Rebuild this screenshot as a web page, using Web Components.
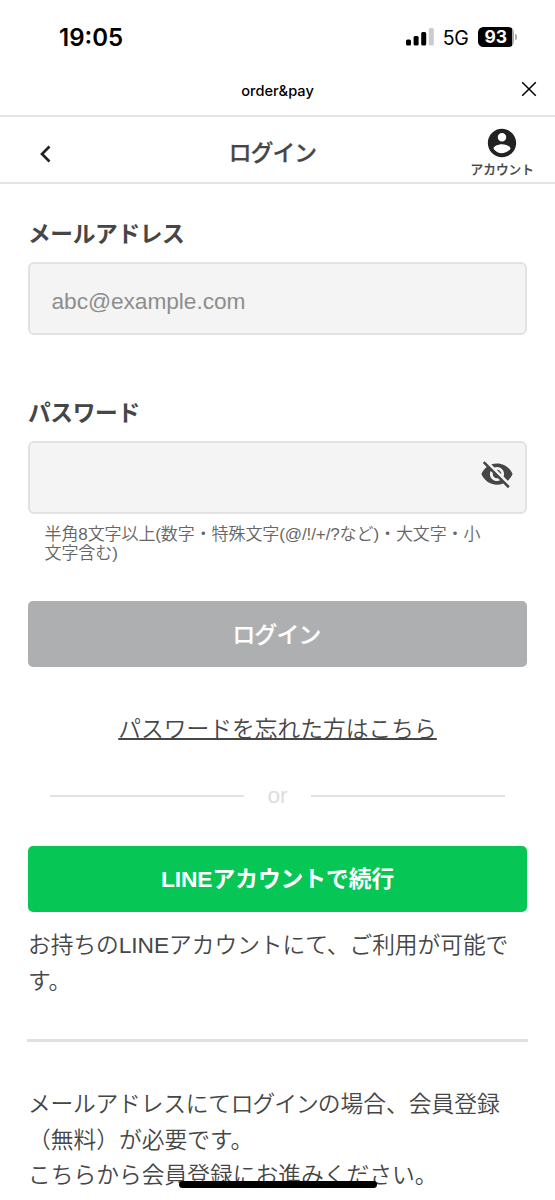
<!DOCTYPE html>
<html lang="ja">
<head>
<meta charset="utf-8">
<title>order&amp;pay ログイン</title>
<style>
html,body{margin:0;padding:0;background:#fff}
body{width:555px;height:1200px;overflow:hidden;color:#464646;font:22.75px/35.5px "Liberation Sans","Noto Sans CJK JP",sans-serif}
</style>
</head>
<body>
<login-screen></login-screen>
<script>
const define = (name, html) => customElements.define(name, class extends HTMLElement {
  constructor() {
    super();
    this.attachShadow({ mode: 'open' }).innerHTML = html;
  }
});

define('status-bar', `
<style>
:host{display:flex;height:74px;box-sizing:border-box;padding:0 38.500px 0 59px;align-items:center;justify-content:space-between;color:#000;font-family:Inter,sans-serif}
.time{font-size:24px;font-weight:600;line-height:30px;margin-top:1px}
.right{display:flex;align-items:center}
.net{font-size:19.500px;line-height:24px;margin:1px 9.500px 0 9px;letter-spacing:-.3px}
.bat{display:flex;align-items:center}
.cell{width:35.5px;height:20px;border-radius:5.5px;background:linear-gradient(90deg,#000 33.5px,#aaa 33.5px);color:#fff;font-size:17.500px;font-weight:700;line-height:20px;text-align:center}
.tip{width:2px;height:6px;margin-left:1px;border-radius:0 2px 2px 0;background:#aaa}
svg{display:block}
</style>
<span class="time">19:05</span>
<div class="right">
<svg width="28" height="18" viewBox="0 0 28 18"><rect y="11.5" width="5" height="6" rx="1.5"/><rect x="7.6" y="8" width="5" height="9.5" rx="1.5"/><rect x="15.2" y="4" width="5" height="13.5" rx="1.5"/><rect x="22.8" y="0" width="5" height="17.5" rx="1.5" fill="#ccc"/></svg>
<span class="net">5G</span>
<div class="bat"><div class="cell">93</div><div class="tip"></div></div>
</div>`);

define('browser-title', `
<style>
:host{display:grid;grid-template-columns:1fr auto 1fr;align-items:center;height:43px;box-sizing:border-box;padding:0 18px 12px;border-bottom:2px solid #e4e4e4;color:#000}
.name{grid-column:2;font:500 14.600px/20px Inter,sans-serif;margin-top:5px}
svg{justify-self:end;display:block}
</style>
<span class="name"><slot></slot></span>
<svg width="16" height="16" viewBox="0 0 16 16" fill="none" stroke="#000" stroke-width="1.5"><path d="M1.2 1.2l13.6 13.6M14.8 1.2L1.2 14.8"/></svg>`);

define('page-header', `
<style>
:host{display:grid;grid-template-columns:100px 1fr 100px;height:67px;box-sizing:border-box;border-bottom:2px solid #e4e4e4;padding:0 20px 0 38px}
.back{margin-top:28px;display:block}
.title{margin:19px 0 0 -28px;text-align:center;font-weight:500;letter-spacing:-.9px;-webkit-text-stroke:.25px #464646;white-space:nowrap}
.acct{justify-self:end;display:flex;flex-direction:column;align-items:center;font-size:12.700px;line-height:18px;font-weight:500;-webkit-text-stroke:.2px #464646;margin-right:1px}
.acct svg{margin:9px 0 1px;display:block}
</style>
<svg class="back" width="14" height="18" viewBox="0 0 14 18" fill="none" stroke="#222" stroke-width="2.7"><path d="M11.5 1.5L4 9l7.5 7.5"/></svg>
<span class="title"><slot></slot></span>
<div class="acct">
<svg width="34" height="34" viewBox="0 0 24 24" fill="#222"><path d="M12 2C6.48 2 2 6.48 2 12s4.48 10 10 10 10-4.48 10-10S17.520 2 12 2zm0 3c1.660 0 3 1.340 3 3s-1.340 3-3 3-3-1.340-3-3 1.340-3 3-3zm0 14.200c-2.500 0-4.710-1.280-6-3.220.030-1.990 4-3.080 6-3.080 1.990 0 5.970 1.090 6 3.080-1.290 1.940-3.500 3.220-6 3.220z"/></svg>
<span>アカウント</span></div>`);

define('form-field', `
<style>
:host{display:block}
label{display:block;box-sizing:border-box;font-weight:700;height:47px;line-height:35px;padding-top:2px;letter-spacing:-.4px}
.box{height:73px;box-sizing:border-box;border:2px solid #e2e2e2;border-radius:6px;background:#f4f4f4;display:flex;align-items:center;justify-content:space-between;padding:6px 11px 0 21.500px;color:#8e8e8e;letter-spacing:-.08px}
</style>
<label><slot name="label"></slot></label>
<div class="box"><span><slot></slot></span><slot name="icon"></slot></div>`);

define('eye-off', `
<style>:host{display:block;margin-top:-13px}svg{display:block}</style>
<svg width="34" height="34" viewBox="0 0 24 24" fill="#464646"><path d="M12 7c2.760 0 5 2.240 5 5 0 .650-.130 1.260-.360 1.830l2.920 2.920c1.510-1.260 2.700-2.890 3.430-4.750-1.730-4.390-6-7.500-11-7.500-1.400 0-2.740.250-3.980.700l2.160 2.160C10.740 7.130 11.350 7 12 7zM2 4.270l2.280 2.280.460.460C3.080 8.300 1.780 10.020 1 12c1.730 4.390 6 7.500 11 7.500 1.550 0 3.030-.300 4.380-.840l.420.420L19.730 22 21 20.730 3.270 3 2 4.270zM7.530 9.800l1.550 1.550c-.050.210-.080.430-.080.650 0 1.660 1.340 3 3 3 .220 0 .440-.030.650-.080l1.550 1.550c-.670.330-1.410.530-2.200.530-2.760 0-5-2.240-5-5 0-.790.200-1.530.530-2.200zm4.310-.780l3.150 3.150.020-.160c0-1.660-1.340-3-3-3l-.170.010z"/></svg>`);

define('action-button', `
<style>
:host{display:flex;height:66px;box-sizing:border-box;padding-top:2px;border-radius:5px;align-items:center;justify-content:center;background:var(--fill);color:#fff;font-weight:700;white-space:nowrap}
</style><slot></slot>`);

define('or-divider', `
<style>
:host{display:flex;align-items:center;height:30px;margin:0 22px;color:#ddd}
i{height:2px;flex:1;background:#e2e2e2}
span{width:67px;text-align:center}
</style><i></i><span>or</span><i></i>`);

define('text-line', `
<style>:host{display:block;white-space:nowrap;font-weight:350}</style><slot></slot>`);

define('home-indicator', `
<style>:host{position:absolute;left:179px;top:1181px;width:198px;height:7px;border-radius:4px;background:#000}</style>`);

define('login-screen', `
<style>
:host{display:block;position:relative;height:1200px;overflow:hidden}
main{padding:31px 28px 0;display:flex;flex-direction:column}
.pw{margin-top:59px}
.help{margin:12px 0 0 16.500px;font-size:17.050px;line-height:18.500px;color:#666;letter-spacing:-.12px}
.login{--fill:#aeafb1;margin-top:38px;padding:3px 2px 0 0;font-weight:500;letter-spacing:-.7px;-webkit-text-stroke:.2px #fff}
.forgot{align-self:center;margin-top:44px;line-height:36px;text-decoration:underline;text-decoration-thickness:1.500px;text-underline-offset:1px}
or-divider{margin-top:34px}
.line{--fill:#06c755;margin-top:35px;letter-spacing:-.05px}
.note{margin-top:16px;letter-spacing:-.06px}
hr{border:0;height:3px;background:#e0e0e0;margin:40px -1px 0;align-self:stretch}
.register{margin-top:45px}
.a{letter-spacing:-.22px}
.b{letter-spacing:-1px}
</style>
<status-bar></status-bar>
<browser-title>order&amp;pay</browser-title>
<page-header>ログイン</page-header>
<main>
<form-field><span slot="label">メールアドレス</span>abc@example.com</form-field>
<form-field class="pw"><span slot="label">パスワード</span><eye-off slot="icon"></eye-off></form-field>
<div class="help"><text-line>半角8文字以上(数字・特殊文字(@/!/+/?など)・大文字・小</text-line><text-line>文字含む)</text-line></div>
<action-button class="login">ログイン</action-button>
<text-line class="forgot">パスワードを忘れた方はこちら</text-line>
<or-divider></or-divider>
<action-button class="line">LINEアカウントで続行</action-button>
<div class="note"><text-line>お持ちのLINEアカウントにて、ご利用が可能で</text-line><text-line>す。</text-line></div>
<hr>
<div class="register"><text-line><span class="a">メールアドレスにて</span><span class="b">ログイン</span>の場合、会員登録</text-line><text-line>（無料）が必要です。</text-line><text-line>こちらから会員登録にお進みください。</text-line></div>
</main>
<home-indicator></home-indicator>`);
</script>
</body>
</html>
